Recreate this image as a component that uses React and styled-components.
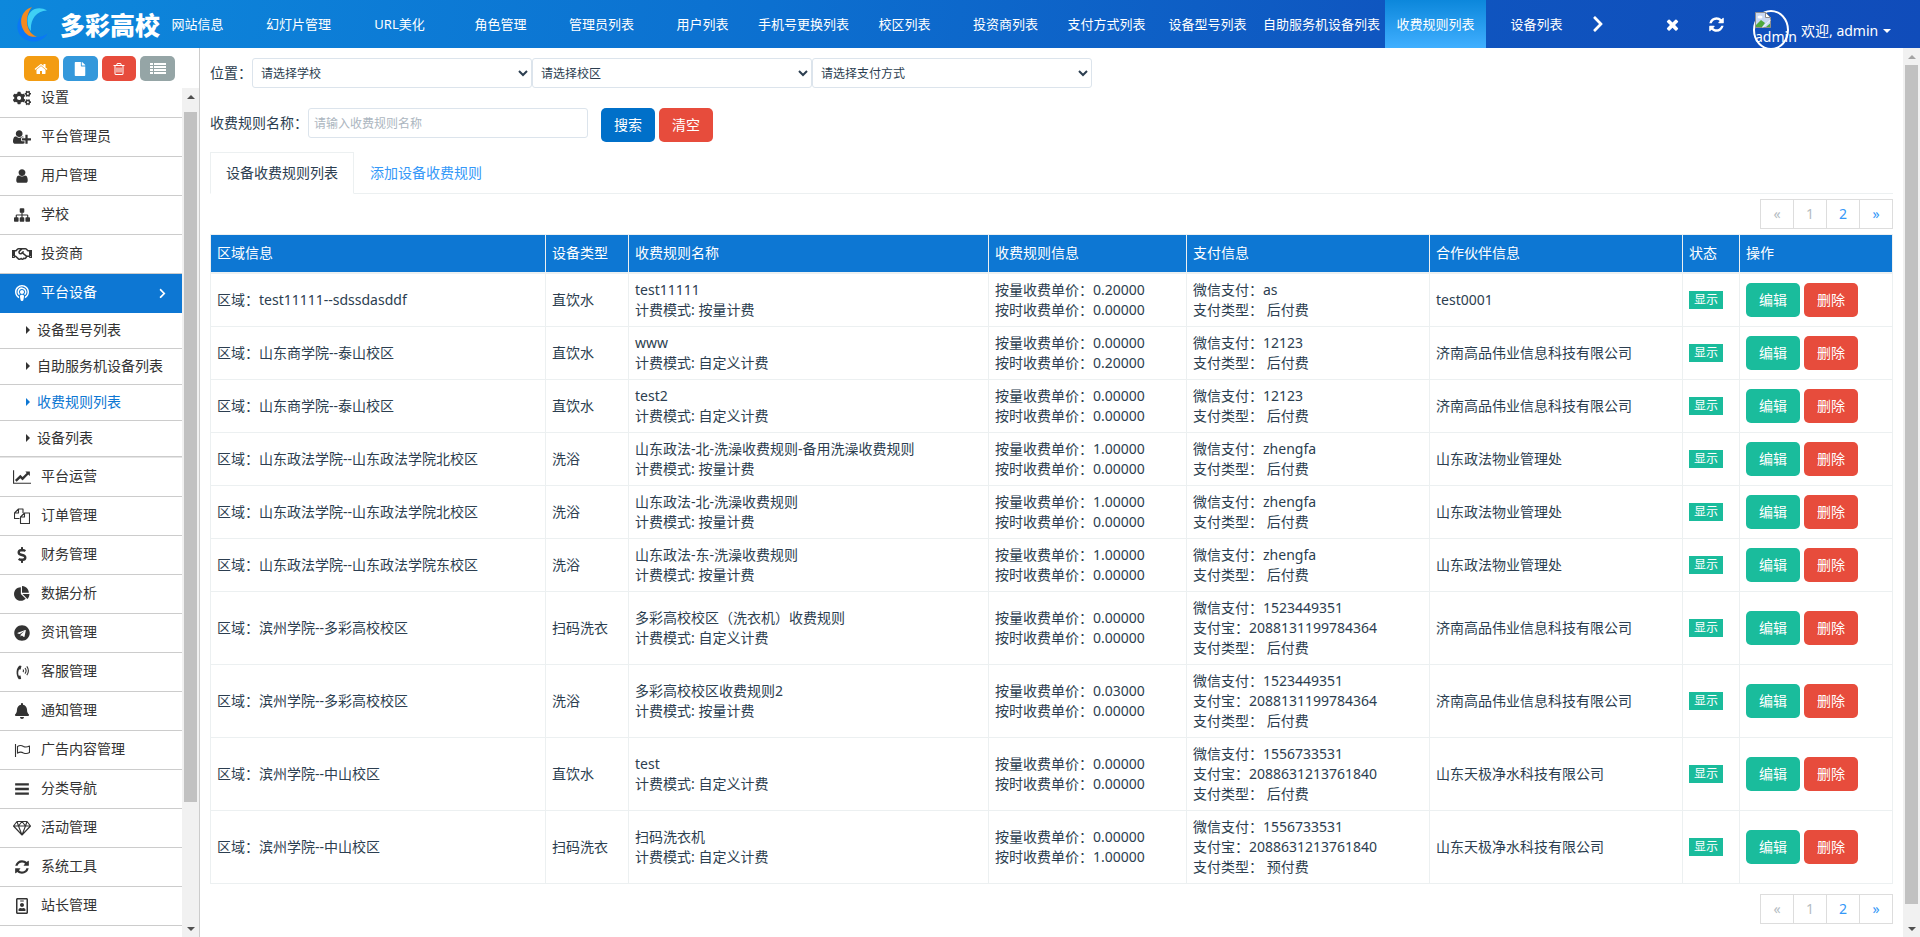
import React from 'react';
import styled, { createGlobalStyle, css } from 'styled-components';
import {
    FaBell, FaChevronRight, FaCogs, FaDollarSign, FaFile, FaPodcast,
    FaRegHandshake, FaRegIdBadge, FaTelegram,
} from 'react-icons/fa';

const GlobalStyle = createGlobalStyle`
    * {
        box-sizing: border-box;
    }
    body {
        margin: 0;
        overflow: hidden;
        background: #fff;
        color: #2c3e50;
        font-family: "Noto Sans", "Noto Sans CJK SC", sans-serif;
        font-size: 14px;
        line-height: 20px;
    }
    button, input, select {
        font-family: inherit;
    }
    a {
        text-decoration: none;
        color: inherit;
    }
`

/*
Solid icons that share the 1792 grid.
*/
const PATHS = {
    refresh: 'M1639 1056q0 5-1 7-64 268-268 434.5t-478 166.5q-146 0-282.5-55t-243.5-157l-129 129q-19 19-45 19t-45-19-19-45v-448q0-26 19-45t45-19h448q26 0 45 19t19 45-19 45l-137 137q71 66 161 102t187 36q134 0 250-65t186-179q11-17 53-117 8-23 30-23h192q13 0 22.5 9.5t9.5 22.5zm25-800v448q0 26-19 45t-45 19h-448q-26 0-45-19t-19-45 19-45l138-138q-148-137-349-137-134 0-250 65t-186 179q-11 17-53 117-8 23-30 23h-199q-13 0-22.5-9.5t-9.5-22.5v-7q65-268 270-434.5t480-166.5q146 0 284 55.5t245 156.5l130-129q19-19 45-19t45 19 19 45z',
    home: 'M1472 992v480q0 26-19 45t-45 19h-384v-384h-256v384h-384q-26 0-45-19t-19-45v-480q0-1 .5-3t.5-3l575-474 575 474q1 2 1 6zm223-69l-62 74q-8 9-21 11h-3q-13 0-21-7l-692-577-692 577q-12 8-24 7-13-2-21-11l-62-74q-8-10-7-23.5t11-21.5l719-599q32-26 76-26t76 26l244 204v-195q0-14 9-23t23-9h192q14 0 23 9t9 23v408l219 182q10 8 11 21.5t-7 23.5z',
    user: 'M1536 1399q0 109-62.5 187t-150.5 78h-854q-88 0-150.5-78t-62.5-187q0-85 8.5-160.5t31.5-152 58.5-131 94-89 134.5-34.5q131 128 313 128t313-128q76 0 134.5 34.5t94 89 58.5 131 31.5 152 8.5 160.5zm-256-887q0 159-112.5 271.5t-271.5 112.5-271.5-112.5-112.5-271.5 112.5-271.5 271.5-112.5 271.5 112.5 112.5 271.5z',
    userPlus: 'M704 896q-159 0-271.5-112.5t-112.5-271.5 112.5-271.5 271.5-112.5 271.5 112.5 112.5 271.5-112.5 271.5-271.5 112.5zm960 128h352q13 0 22.5 9.5t9.5 22.5v192q0 13-9.5 22.5t-22.5 9.5h-352v352q0 13-9.5 22.5t-22.5 9.5h-192q-13 0-22.5-9.5t-9.5-22.5v-352h-352q-13 0-22.5-9.5t-9.5-22.5v-192q0-13 9.5-22.5t22.5-9.5h352v-352q0-13 9.5-22.5t22.5-9.5h192q13 0 22.5 9.5t9.5 22.5v352zm-736 224q0 52 38 90t90 38h256v238q-68 50-171 50h-874q-121 0-194-69t-73-190q0-53 3.5-103.5t14-109 26.5-108.5 43-97.5 62-81 85.5-53.5 111.5-20q19 0 39 17 79 61 154.5 91.5t164.5 30.5 164.5-30.5 154.5-91.5q20-17 39-17 132 0 217 96h-223q-52 0-90 38t-38 90v192z',
    sitemap: 'M1792 1248v320q0 40-28 68t-68 28h-320q-40 0-68-28t-28-68v-320q0-40 28-68t68-28h96v-192h-512v192h96q40 0 68 28t28 68v320q0 40-28 68t-68 28h-320q-40 0-68-28t-28-68v-320q0-40 28-68t68-28h96v-192h-512v192h96q40 0 68 28t28 68v320q0 40-28 68t-68 28h-320q-40 0-68-28t-28-68v-320q0-40 28-68t68-28h96v-192q0-52 38-90t90-38h512v-192h-96q-40 0-68-28t-28-68v-320q0-40 28-68t68-28h320q40 0 68 28t28 68v320q0 40-28 68t-68 28h-96v192h512q52 0 90 38t38 90v192h96q40 0 68 28t28 68z',
    trash: 'M704 736v576q0 14-9 23t-23 9h-64q-14 0-23-9t-9-23v-576q0-14 9-23t23-9h64q14 0 23 9t9 23zm256 0v576q0 14-9 23t-23 9h-64q-14 0-23-9t-9-23v-576q0-14 9-23t23-9h64q14 0 23 9t9 23zm256 0v576q0 14-9 23t-23 9h-64q-14 0-23-9t-9-23v-576q0-14 9-23t23-9h64q14 0 23 9t9 23zm128 724v-948h-896v948q0 22 7 40.5t14.5 27 10.5 8.5h832q3 0 10.5-8.5t14.5-27 7-40.5zm-672-1076h448l-48-117q-7-9-17-11h-317q-10 2-17 11zm928 32v64q0 14-9 23t-23 9h-96v948q0 83-47 143.5t-113 60.5h-832q-66 0-113-58.5t-47-141.5v-952h-96q-14 0-23-9t-9-23v-64q0-14 9-23t23-9h309l70-167q15-37 54-63t79-26h320q40 0 79 26t54 63l70 167h309q14 0 23 9t9 23z',
    times: 'M1490 1322q0 40-28 68l-136 136q-28 28-68 28t-68-28l-294-294-294 294q-28 28-68 28t-68-28l-136-136q-28-28-28-68t28-68l294-294-294-294q-28-28-28-68t28-68l136-136q28-28 68-28t68 28l294 294 294-294q28-28 68-28t68 28l136 136q28 28 28 68t-28 68l-294 294 294 294q28 28 28 68z',
    pieChart: 'M768 890l546 546q-106 108-247.5 168t-298.5 60q-209 0-385.5-103t-279.5-279.5-103-385.5 103-385.5 279.5-279.5 385.5-103v762zm187 6h773q0 157-60 298.5t-168 247.5zm709-128h-768v-768q209 0 385.5 103t279.5 279.5 103 385.5z',
    lineChart: 'M2048 1536v128h-2048v-1536h128v1408h1920zm-128-1248v435q0 21-19.5 29.5t-35.5-7.5l-121-121-633 633q-10 10-23 10t-23-10l-233-233-416 416-192-192 585-585q10-10 23-10t23 10l233 233 464-464-121-121q-16-16-7.5-35.5t29.5-19.5h435q14 0 23 9t9 23z',
    bars: 'M128 1280h1536v256h-1536zM128 768h1536v256h-1536zM128 256h1536v256h-1536z',
}

/*
Draws one of the icons above. Wide ones take a 2048 unit box.
*/
const Icon = ({ name, size = 16, wide }) => (
    <svg
        width={wide ? Math.round(size * 8 / 7) : size}
        height={size}
        viewBox={wide ? '0 0 2048 1792' : '0 0 1792 1792'}
        fill="currentColor"
        aria-hidden="true"
    >
        <path d={PATHS[name]} />
    </svg>
)

/*
Outlined icons on a 16 unit grid.
*/
const Outline = ({ children, width = 16 }) => (
    <svg width={width} height="16" viewBox={`0 0 ${width} 16`} fill="none" stroke="currentColor" strokeWidth="1.1" strokeLinejoin="round" aria-hidden="true">
        {children}
    </svg>
)

const CopyIcon = () => (
    <Outline>
        <path d="M5.5 10.5h-5v-5.500l4-4h4.500v4M0.500 5h4v-4M6.500 15.500v-6.500l4-4h5v10.500zM6.500 9h4v-4" />
    </Outline>
)

const PhoneIcon = () => (
    <Outline>
        <path d="M5.800 1.500C2 3.500 1.500 11 4.800 15.200l2.400-.3-.7-3.400-1.700.2c-.9-2.200-.7-4.600.2-6.300l1.600.2.900-3.500z" fill="currentColor" stroke="none" />
        <path d="M9 5.500q1 1.200 0 2.600M11 4q2.200 2.800 0 5.600M12.800 2.300q3.200 4.300 0 8.800" />
    </Outline>
)

const FlagIcon = () => (
    <Outline>
        <path d="M1.500 2v13" />
        <path d="M3.500 4.500q3-2 6 0 2.500 1.300 6-.5v6.500q-3 1.800-6 .4-3-1.700-6 .2z" />
    </Outline>
)

const DiamondIcon = () => (
    <Outline width={18}>
        <path d="M4 1.500h10l3.500 4.500-8.500 9-8.500-9zM.5 6h17M9 1.500l-3.500 4.500 3.500 9 3.500-9zM4 1.500l1.500 4.500M14 1.500l-1.500 4.500" />
    </Outline>
)

const ListIcon = () => (
    <svg width="16" height="12" viewBox="0 0 16 12" fill="currentColor" aria-hidden="true">
        <path d="M0 0h3v2H0zM4 0h12v2H4zM0 3h3v2H0zM4 3h12v2H4zM0 6h3v2H0zM4 6h12v2H4zM0 9h3v2H0zM4 9h12v2H4z" />
    </svg>
)

const BrokenImage = () => (
    <svg width="16" height="16" viewBox="0 0 16 16" aria-hidden="true">
        <path d="M.5.500h10l5 5v10h-15z" fill="#c8d8f4" stroke="#8d8d8d" />
        <path d="M10.500.500v5h5z" fill="#fff" stroke="#8d8d8d" />
        <ellipse cx="5" cy="5" rx="2.500" ry="1.500" fill="#fff" />
        <path d="M1 15v-2l5-5 4 3 -3 4z" fill="#4fa83d" />
        <path d="M8 15.500l7.500-7v-1l-8.500 8z" fill="#fff" />
        <path d="M11 15l4-3.500v3.500z" fill="#4fa83d" />
    </svg>
)

/* ---------- header ---------- */

const Header = styled.header`
    display: flex;
    align-items: stretch;
    height: 48px;
    overflow: hidden;
    color: #fff;
    background: linear-gradient(100deg, #0d88dc 0%, #0c70d0 40%, #0f56c0 72%, #104cba 100%);
`

const Brand = styled.a`
    display: flex;
    align-items: center;
    flex: none;
    width: 147px;
    padding-left: 16px;
    gap: 10px;
    font-family: "Noto Sans CJK SC", sans-serif;
    font-size: 25px;
    font-weight: 900;
    white-space: nowrap;
    svg {
        flex: none;
    }
`

const Logo = () => (
    <svg width="34" height="36" viewBox="0 0 34 36" fill="none" aria-hidden="true">
        <path d="M5 10C-3 22 3 34 16 35.500c7 .5 13-3 15.500-8-8 6-19 4-23-4z" fill="#0a78f5" />
        <path d="M16 1C6 4 2 15 8 25c3 5 8 6.500 13 5.500C11 28 7 12 16 1z" fill="#f58a1f" />
        <path d="M31 4.500C22-1 11 4 11.500 15c0 5 1.500 8 3.500 10-1-10 4-20 16-20.500z" fill="#3fd0f5" />
    </svg>
)

const HeaderTabs = styled.nav`
    display: flex;
    flex: none;
`

const HeaderTab = styled.a`
    display: flex;
    align-items: center;
    justify-content: center;
    min-width: 101px;
    padding: 0 5px;
    font-size: 13px;
    white-space: nowrap;
    background: ${props => props.$active ? 'linear-gradient(#0c87db, #40afff)' : 'none'};
`

const HeaderButton = styled.button`
    display: flex;
    align-items: center;
    justify-content: center;
    width: ${props => props.$narrow ? '22px' : '44px'};
    padding: 0;
    border: 0;
    background: none;
    color: #fff;
`

const HeaderTools = styled.div`
    display: flex;
    margin-left: auto;
`

const UserMenu = styled.a`
    display: flex;
    align-items: flex-start;
    width: 182px;
    padding: 10px 0 0 15px;
    white-space: nowrap;
`

const Avatar = styled.span`
    display: flex;
    flex-direction: column;
    flex: none;
    width: 36px;
    height: 40px;
    margin-right: 12px;
    border: 2px solid #fff;
    border-radius: 50%;
    line-height: 18px;
    svg {
        flex: none;
    }
`

const Welcome = styled.span`
    display: flex;
    align-items: center;
    gap: 5px;
    padding-top: 11px;
`

const Caret = styled.span`
    border: 4px solid transparent;
    border-top-color: #fff;
    border-bottom: 0;
`

/* ---------- sidebar ---------- */

const Body = styled.div`
    display: flex;
    height: calc(100vh - 48px);
`

const Sidebar = styled.aside`
    display: flex;
    flex-direction: column;
    flex: none;
    width: 200px;
    border-right: 1px solid #ccc;
`

const Shortcuts = styled.div`
    display: flex;
    flex: none;
    gap: 4px;
    height: 40px;
    padding: 8px 24px 7px;
`

const Shortcut = styled.button`
    display: flex;
    align-items: center;
    justify-content: center;
    width: 35px;
    padding: 0;
    border: 0;
    border-radius: 5px;
    color: #fff;
    background: ${props => props.$color};
`

const SidebarScroll = styled.div`
    display: flex;
    flex: 1;
    min-height: 0;
`

const MenuWrap = styled.nav`
    flex: 1;
    overflow: hidden;
`

const Menu = styled.ul`
    margin: -9px 0 0;
    padding: 0;
    list-style: none;
`

const MenuLink = styled.a`
    display: flex;
    align-items: center;
    gap: 9px;
    height: 39px;
    padding: 0 14px 0 12px;
    border-bottom: 1px solid #ccc;
    color: #333;
    ${props => props.$active && css`
        color: #fff;
        background: #0d77d3;
        border-bottom-color: #0d77d3;
    `}
`

const MenuIcon = styled.span`
    display: flex;
    align-items: center;
    justify-content: center;
    width: 20px;
    height: 16px;
`

const MenuText = styled.span`
    flex: 1;
    padding-bottom: 2px;
`

const SubMenu = styled.ul`
    padding: 0;
    border-bottom: 1px solid #e5e5e5;
    list-style: none;
`

const SubLink = styled.a`
    display: flex;
    align-items: center;
    gap: 7px;
    height: 36px;
    padding: 0 0 2px 26px;
    border-bottom: 1px solid #ccc;
    color: ${props => props.$active ? '#0d77d3' : '#333'};
    white-space: nowrap;
    &::before {
        content: "";
        border: 4px solid transparent;
        border-left-color: currentColor;
        border-right: 0;
    }
`

/* ---------- scroll bars ---------- */

const Track = styled.div`
    display: flex;
    flex-direction: column;
    flex: none;
    width: 17px;
    background: #f1f1f1;
`

const TrackArrow = styled.span`
    display: flex;
    align-items: center;
    justify-content: center;
    flex: none;
    height: 17px;
    &::before {
        content: "";
        border: 4px solid transparent;
        ${props => props.$up
            ? css`border-top: 0; border-bottom-color: ${props.$color};`
            : css`border-bottom: 0; border-top-color: ${props.$color};`}
    }
`

const Thumb = styled.div`
    flex: ${props => props.$size};
    margin: 0 2px;
    background: #c1c1c1;
`

const Space = styled.div`
    flex: ${props => props.$size};
`

const ScrollBar = ({ before, size, after, atTop }) => (
    <Track aria-hidden="true">
        <TrackArrow $up $color={atTop ? '#a3a3a3' : '#505050'} />
        <Space $size={before} />
        <Thumb $size={size} />
        <Space $size={after} />
        <TrackArrow $color="#505050" />
    </Track>
)

/* ---------- content ---------- */

const Content = styled.main`
    flex: 1;
    min-width: 0;
    padding: 10px 10px 0;
    overflow: hidden;
`

const Filters = styled.form`
    display: flex;
    flex-direction: column;
    gap: 20px;
`

const Field = styled.div`
    display: flex;
    align-items: flex-start;
    label {
        line-height: 30px;
    }
`

const inputStyle = css`
    width: 280px;
    height: 30px;
    border: 1px solid #dce4ec;
    border-radius: 3px;
    background: #fff;
    color: #2c3e50;
    font-size: 12px;
`

const Select = styled.select`
    ${inputStyle}
    padding: 0 4px;
`

const TextInput = styled.input`
    ${inputStyle}
    margin-right: 13px;
    padding: 0 5px;
    &::placeholder {
        color: #acb6c0;
    }
`

const Button = styled.button`
    height: 34px;
    min-width: 54px;
    padding: 0 12px;
    border: 0;
    border-radius: 5px;
    color: #fff;
    background: ${props => props.$color};
    font-size: 14px;
    line-height: 20px;
    & + & {
        margin-left: 4px;
    }
`

const Tabs = styled.div`
    display: flex;
    margin-top: 10px;
    border-bottom: 1px solid #ecf0f1;
`

const Tab = styled.a`
    padding: 10px 15px;
    margin-bottom: -1px;
    border: 1px solid ${props => props.$active ? '#ecf0f1' : 'transparent'};
    border-bottom-color: ${props => props.$active ? '#fff' : 'transparent'};
    color: ${props => props.$active ? '#2c3e50' : '#3498f8'};
`

const Pager = styled.ul`
    display: flex;
    justify-content: flex-end;
    margin: ${props => props.$bottom ? '10px 0 0' : '5px 0'};
    padding: 0;
    list-style: none;
`

const PageLink = styled.a`
    display: block;
    width: 34px;
    height: 30px;
    margin-left: -1px;
    border: 1px solid #ddd;
    color: ${props => props.$off ? '#b4bcc2' : '#3498f8'};
    line-height: 28px;
    text-align: center;
`

const Table = styled.table`
    width: 100%;
    table-layout: fixed;
    border-collapse: collapse;
    th, td {
        padding: 6px;
        border: 1px solid #ecf0f1;
        text-align: left;
        vertical-align: middle;
    }
    th {
        height: 38px;
        border-bottom-width: 2px;
        background: #0d77d3;
        color: #fff;
        font-weight: 400;
    }
`

const Badge = styled.span`
    display: block;
    width: 34px;
    background: #1abc9c;
    color: #fff;
    font-size: 12px;
    line-height: 18px;
    text-align: center;
`

const Actions = styled.div`
    display: flex;
`

const headerTabs = [
    '网站信息', '幻灯片管理', 'URL美化', '角色管理', '管理员列表', '用户列表', '手机号更换列表', '校区列表',
    '投资商列表', '支付方式列表', '设备型号列表', '自助服务机设备列表', '收费规则列表', '设备列表',
]

const menu = [
    { text: '设置', icon: <FaCogs size={18} /> },
    { text: '平台管理员', icon: <Icon name="userPlus" wide /> },
    { text: '用户管理', icon: <Icon name="user" /> },
    { text: '学校', icon: <Icon name="sitemap" /> },
    { text: '投资商', icon: <FaRegHandshake size={20} /> },
    {
        text: '平台设备',
        icon: <FaPodcast size={16} />,
        children: ['设备型号列表', '自助服务机设备列表', '收费规则列表', '设备列表'],
    },
    { text: '平台运营', icon: <Icon name="lineChart" wide /> },
    { text: '订单管理', icon: <CopyIcon /> },
    { text: '财务管理', icon: <FaDollarSign size={16} /> },
    { text: '数据分析', icon: <Icon name="pieChart" /> },
    { text: '资讯管理', icon: <FaTelegram size={16} /> },
    { text: '客服管理', icon: <PhoneIcon /> },
    { text: '通知管理', icon: <FaBell size={16} /> },
    { text: '广告内容管理', icon: <FlagIcon /> },
    { text: '分类导航', icon: <Icon name="bars" /> },
    { text: '活动管理', icon: <DiamondIcon /> },
    { text: '系统工具', icon: <Icon name="refresh" /> },
    { text: '站长管理', icon: <FaRegIdBadge size={16} /> },
]

const columns = [
    ['区域信息', 335], ['设备类型', 83], ['收费规则名称', 360], ['收费规则信息', 198],
    ['支付信息', 243], ['合作伙伴信息', 253], ['状态', 57], ['操作', 153],
]

const rows = [
    { area: 'test11111--sdssdasddf', type: '直饮水', name: 'test11111', mode: '按量计费', price: ['0.20000', '0.00000'], wechat: 'as', pay: '后付费', partner: 'test0001' },
    { area: '山东商学院--泰山校区', type: '直饮水', name: 'www', mode: '自定义计费', price: ['0.00000', '0.20000'], wechat: '12123', pay: '后付费', partner: '济南高品伟业信息科技有限公司' },
    { area: '山东商学院--泰山校区', type: '直饮水', name: 'test2', mode: '自定义计费', price: ['0.00000', '0.00000'], wechat: '12123', pay: '后付费', partner: '济南高品伟业信息科技有限公司' },
    { area: '山东政法学院--山东政法学院北校区', type: '洗浴', name: '山东政法-北-洗澡收费规则-备用洗澡收费规则', mode: '按量计费', price: ['1.00000', '0.00000'], wechat: 'zhengfa', pay: '后付费', partner: '山东政法物业管理处' },
    { area: '山东政法学院--山东政法学院北校区', type: '洗浴', name: '山东政法-北-洗澡收费规则', mode: '按量计费', price: ['1.00000', '0.00000'], wechat: 'zhengfa', pay: '后付费', partner: '山东政法物业管理处' },
    { area: '山东政法学院--山东政法学院东校区', type: '洗浴', name: '山东政法-东-洗澡收费规则', mode: '按量计费', price: ['1.00000', '0.00000'], wechat: 'zhengfa', pay: '后付费', partner: '山东政法物业管理处' },
    { area: '滨州学院--多彩高校校区', type: '扫码洗衣', name: '多彩高校校区（洗衣机）收费规则', mode: '自定义计费', price: ['0.00000', '0.00000'], wechat: '1523449351', alipay: '2088131199784364', pay: '后付费', partner: '济南高品伟业信息科技有限公司' },
    { area: '滨州学院--多彩高校校区', type: '洗浴', name: '多彩高校校区收费规则2', mode: '按量计费', price: ['0.03000', '0.00000'], wechat: '1523449351', alipay: '2088131199784364', pay: '后付费', partner: '济南高品伟业信息科技有限公司' },
    { area: '滨州学院--中山校区', type: '直饮水', name: 'test', mode: '自定义计费', price: ['0.00000', '0.00000'], wechat: '1556733531', alipay: '2088631213761840', pay: '后付费', partner: '山东天极净水科技有限公司' },
    { area: '滨州学院--中山校区', type: '扫码洗衣', name: '扫码洗衣机', mode: '自定义计费', price: ['0.00000', '1.00000'], wechat: '1556733531', alipay: '2088631213761840', pay: '预付费', partner: '山东天极净水科技有限公司' },
]

const Pagination = ({ bottom }) => (
    <Pager $bottom={bottom}>
        <li><PageLink href="#" $off>«</PageLink></li>
        <li><PageLink href="#" $off>1</PageLink></li>
        <li><PageLink href="#">2</PageLink></li>
        <li><PageLink href="#">»</PageLink></li>
    </Pager>
)

/*
Displays the top bar with the open pages and the user menu.
*/
const TopBar = () => (
    <Header>
        <Brand href="#"><Logo />多彩高校</Brand>
        <HeaderTabs>
            {headerTabs.map(text => (
                <HeaderTab key={text} href="#" $active={text === '收费规则列表'}>{text}</HeaderTab>
            ))}
        </HeaderTabs>
        <HeaderButton $narrow aria-label="下一页"><FaChevronRight size={18} /></HeaderButton>
        <HeaderTools>
            <HeaderButton aria-label="关闭"><Icon name="times" size={17} /></HeaderButton>
            <HeaderButton aria-label="刷新"><Icon name="refresh" size={17} /></HeaderButton>
            <UserMenu href="#">
                <Avatar><BrokenImage />admin</Avatar>
                <Welcome>欢迎, admin <Caret /></Welcome>
            </UserMenu>
        </HeaderTools>
    </Header>
)

/*
Displays the shortcuts and the menu, with the open group unfolded.
*/
const SideMenu = () => (
    <Sidebar>
        <Shortcuts>
            <Shortcut $color="#f39c12" aria-label="首页"><Icon name="home" size={14} /></Shortcut>
            <Shortcut $color="#3498db" aria-label="文件"><FaFile size={14} /></Shortcut>
            <Shortcut $color="#e74c3c" aria-label="清除"><Icon name="trash" size={14} /></Shortcut>
            <Shortcut $color="#95a5a6" aria-label="列表"><ListIcon /></Shortcut>
        </Shortcuts>
        <SidebarScroll>
            <MenuWrap>
                <Menu>
                    {menu.map(item => (
                        <li key={item.text}>
                            <MenuLink href="#" $active={!!item.children}>
                                <MenuIcon>{item.icon}</MenuIcon>
                                <MenuText>{item.text}</MenuText>
                                {item.children && <FaChevronRight size={11} />}
                            </MenuLink>
                            {item.children && (
                                <SubMenu>
                                    {item.children.map(text => (
                                        <li key={text}>
                                            <SubLink href="#" $active={text === '收费规则列表'}>{text}</SubLink>
                                        </li>
                                    ))}
                                </SubMenu>
                            )}
                        </li>
                    ))}
                </Menu>
            </MenuWrap>
            <ScrollBar before={7} size={690} after={118} />
        </SidebarScroll>
    </Sidebar>
)

const RuleTable = () => (
    <Table>
        <colgroup>
            {columns.map(([title, width]) => <col key={title} width={width} />)}
        </colgroup>
        <thead>
            <tr>
                {columns.map(([title]) => <th key={title}>{title}</th>)}
            </tr>
        </thead>
        <tbody>
            {rows.map((row, i) => (
                <tr key={i}>
                    <td>区域：{row.area}</td>
                    <td>{row.type}</td>
                    <td>{row.name}<br />计费模式: {row.mode}</td>
                    <td>按量收费单价：{row.price[0]}<br />按时收费单价：{row.price[1]}</td>
                    <td>
                        微信支付：{row.wechat}<br />
                        {row.alipay && <>支付宝：{row.alipay}<br /></>}
                        支付类型： {row.pay}
                    </td>
                    <td>{row.partner}</td>
                    <td><Badge>显示</Badge></td>
                    <td>
                        <Actions>
                            <Button $color="#1abc9c">编辑</Button>
                            <Button $color="#e74c3c">删除</Button>
                        </Actions>
                    </td>
                </tr>
            ))}
        </tbody>
    </Table>
)

const App = () => (
    <>
        <GlobalStyle />
        <TopBar />
        <Body>
            <SideMenu />
            <Content>
                <Filters>
                    <Field>
                        <label htmlFor="school">位置：</label>
                        <Select id="school"><option>请选择学校</option></Select>
                        <Select aria-label="校区"><option>请选择校区</option></Select>
                        <Select aria-label="支付方式"><option>请选择支付方式</option></Select>
                    </Field>
                    <Field>
                        <label htmlFor="rule">收费规则名称：</label>
                        <TextInput id="rule" type="text" placeholder="请输入收费规则名称" />
                        <Button type="button" $color="#0070c9">搜索</Button>
                        <Button type="button" $color="#e74c3c">清空</Button>
                    </Field>
                </Filters>
                <Tabs>
                    <Tab href="#" $active>设备收费规则列表</Tab>
                    <Tab href="#">添加设备收费规则</Tab>
                </Tabs>
                <Pagination />
                <RuleTable />
                <Pagination bottom />
            </Content>
            <ScrollBar before={0} size={839} after={16} atTop />
        </Body>
    </>
)

export default App
